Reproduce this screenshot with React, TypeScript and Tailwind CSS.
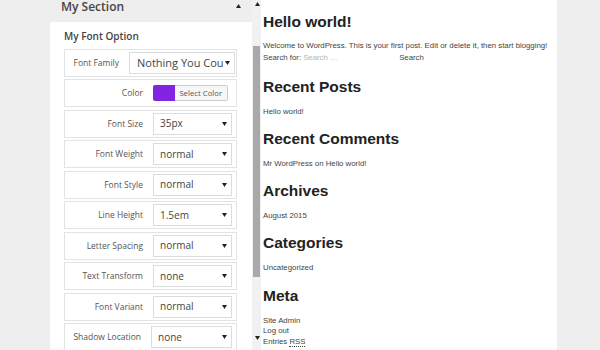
import type { ReactNode } from 'react';

interface FontRow {
  label: string;
  value?: string;
  kind: 'select' | 'family' | 'color' | 'wide';
}

const rows: FontRow[] = [
  { label: 'Font Family', value: 'Nothing You Could Do', kind: 'family' },
  { label: 'Color', kind: 'color' },
  { label: 'Font Size', value: '35px', kind: 'select' },
  { label: 'Font Weight', value: 'normal', kind: 'select' },
  { label: 'Font Style', value: 'normal', kind: 'select' },
  { label: 'Line Height', value: '1.5em', kind: 'select' },
  { label: 'Letter Spacing', value: 'normal', kind: 'select' },
  { label: 'Text Transform', value: 'none', kind: 'select' },
  { label: 'Font Variant', value: 'normal', kind: 'select' },
  { label: 'Shadow Location', value: 'none', kind: 'wide' },
];

function Caret({ up = false }: { up?: boolean }) {
  return (
    <svg width="5" height="4" viewBox="0 0 5 4" className="shrink-0">
      <polygon points={up ? '0,4 5,4 2.5,0' : '0,0 5,0 2.5,4'} fill="#222" />
    </svg>
  );
}

function SelectBox({ value, className, textClass }: { value: string; className: string; textClass: string }) {
  return (
    <div className={`flex h-[22px] items-center border border-[#dcdcdc] bg-white pr-[4px] ${className}`}>
      <span className={`flex-1 overflow-hidden whitespace-nowrap text-[#444] ${textClass}`}>{value}</span>
      <span className="ml-[2px]">
        <Caret />
      </span>
    </div>
  );
}

function Row({ row }: { row: FontRow }) {
  let control: ReactNode;
  let pad = 'pr-[4px]';
  if (row.kind === 'color') {
    pad = 'pr-[8.5px]';
    control = (
      <div className="flex h-[16px]">
        <div className="w-[22px] rounded-l-[2px] bg-[#8224e3]" />
        <div className="flex w-[52.5px] items-center justify-center rounded-r-[2px] border border-l-0 border-[#cccccc] bg-[#f7f7f7] text-[7.75px] text-[#555]">
          Select Color
        </div>
      </div>
    );
  } else if (row.kind === 'family') {
    pad = 'pr-[1px]';
    control = <SelectBox value={row.value!} className="w-[106px] pl-[7px]" textClass="text-[11px]" />;
  } else if (row.kind === 'wide') {
    control = <SelectBox value={row.value!} className="w-[81px] pl-[6px]" textClass="text-[10px]" />;
  } else {
    control = <SelectBox value={row.value!} className="w-[79px] pl-[6px]" textClass="text-[10px]" />;
  }
  return (
    <div className={`flex h-[28px] items-center justify-end gap-[10px] border border-[#e3e3e3] bg-white ${pad}`}>
      <span className="text-[8.5px] text-[#555]">{row.label}</span>
      {control}
    </div>
  );
}

const widgets = [
  { title: 'Recent Posts', items: ['Hello world!'], mt: 'mt-[14px]' },
  { title: 'Recent Comments', items: ['Mr WordPress on Hello world!'], mt: 'mt-[12.8px]' },
  { title: 'Archives', items: ['August 2015'], mt: 'mt-[12.8px]' },
  { title: 'Categories', items: ['Uncategorized'], mt: 'mt-[12.8px]' },
  { title: 'Meta', items: ['Site Admin', 'Log out', 'Entries RSS'], mt: 'mt-[12.8px]' },
];

export default function App() {
  return (
    <div className="flex h-[350px] w-[600px] overflow-hidden bg-[#eeeeee]">
      <div className="w-[50px] shrink-0" />

      {/* Customizer panel */}
      <div className="flex w-[202px] shrink-0 flex-col font-['Open_Sans',sans-serif]">
        <div className="flex h-[22px] shrink-0 items-start justify-between pl-[11px] pr-[11px]">
          <span className="text-[12px] leading-[13px] font-semibold text-[#444]">My Section</span>
          <span className="mt-[4px]">
            <Caret up />
          </span>
        </div>
        <div className="flex-1 bg-white pl-[14px] pr-[15px] pt-[7.5px]">
          <h3 className="mb-[7.4px] text-[10px] leading-[12px] font-semibold text-[#444]">My Font Option</h3>
          <div className="flex flex-col gap-[2.5px]">
            {rows.map((row) => (
              <Row key={row.label} row={row} />
            ))}
          </div>
        </div>
      </div>

      {/* Scrollbar */}
      <div className="relative w-[9px] shrink-0 bg-[#f1f1f1]">
        <span className="absolute left-[2.5px] top-[2px]">
          <Caret up />
        </span>
        <div className="ml-[0.5px] mt-[46px] h-[231px] w-[7px] bg-[#a9a9a9]" />
        <span className="absolute left-[2.5px] top-[336px]">
          <Caret />
        </span>
      </div>

      {/* Preview */}
      <div className="w-[296px] shrink-0 bg-white pl-[2px] font-['Liberation_Sans',Arial,sans-serif] text-[#444]">
        <h1 className="mt-[13px] text-[15.5px] leading-[18px] font-bold text-[#222]">Hello world!</h1>
        <p className="mt-[10px] text-[7.8px] leading-[10.5px]">
          Welcome to WordPress. This is your first post. Edit or delete it, then start blogging!
        </p>
        <div className="flex h-[12px] items-center text-[7.8px]">
          <span>Search for:</span>
          <span className="w-[98px] pl-[2px] text-[#b4b4b4]">Search …</span>
          <span>Search</span>
        </div>
        {widgets.map((w) => (
          <div key={w.title} className={w.mt}>
            <h2 className="text-[15.5px] leading-[18px] font-bold text-[#222]">{w.title}</h2>
            <ul className="mt-[11px] text-[7.8px] leading-[10.5px]">
              {w.items.map((it) =>
                it === 'Entries RSS' ? (
                  <li key={it}>
                    Entries <abbr className="border-b border-dotted border-[#444] no-underline">RSS</abbr>
                  </li>
                ) : (
                  <li key={it}>{it}</li>
                )
              )}
            </ul>
          </div>
        ))}
      </div>
    </div>
  );
}
